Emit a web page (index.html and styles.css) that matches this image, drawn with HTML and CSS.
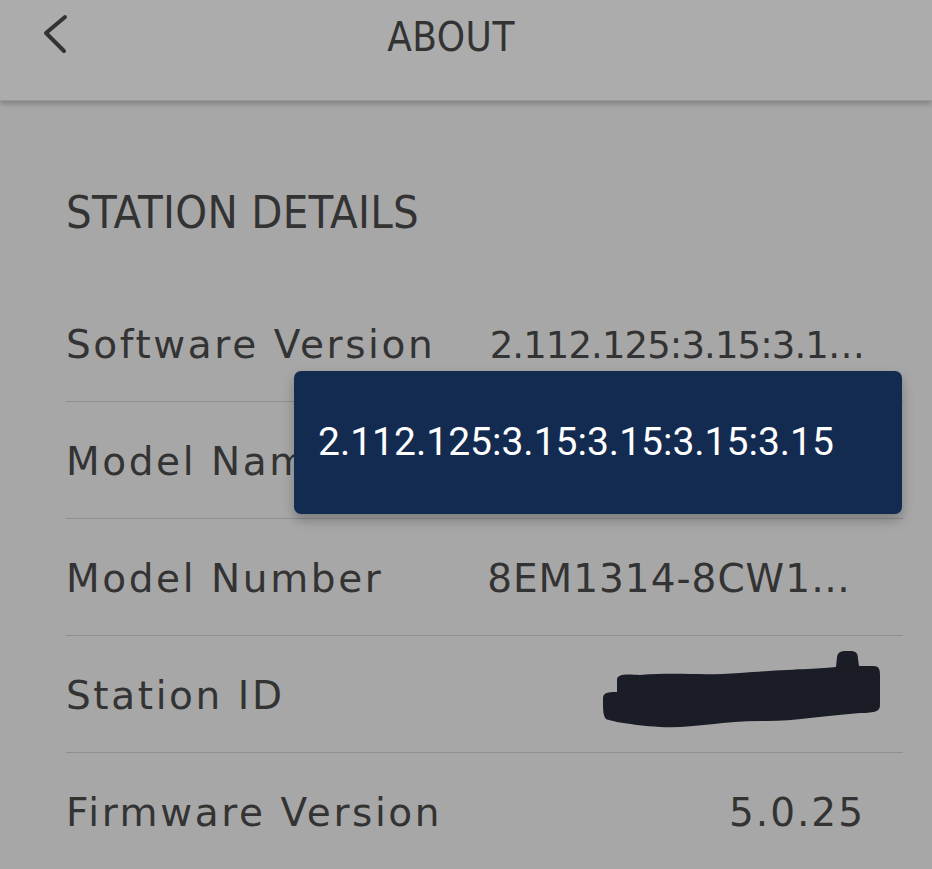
FILE: index.html
```html
<!DOCTYPE html>
<html lang="en">
<head>
<meta charset="utf-8">
<title>About</title>
<link rel="stylesheet" href="styles.css">
</head>
<body>
<div class="screen">
  <header class="topbar">
    <button class="back" aria-label="Back">
      <svg width="40" height="50" viewBox="0 0 40 50"><path d="M24 5 L5 21 L23 39" fill="none" stroke="#333" stroke-width="4" stroke-linecap="round" stroke-linejoin="round"/></svg>
    </button>
    <h1 class="title">ABOUT</h1>
  </header>
  <main class="content">
    <h2 class="section">STATION DETAILS</h2>
    <ul class="rows">
      <li class="row"><span class="label">Software Version</span><span class="value value-long">2.112.125:3.15:3.1…</span></li>
      <li class="row"><span class="label">Model Name</span><span class="value"></span></li>
      <li class="row"><span class="label">Model Number</span><span class="value value-trunc">8EM1314-8CW1…</span></li>
      <li class="row"><span class="label">Station ID</span><span class="value redact">
        <svg width="290" height="90" viewBox="595 645 290 90"><path d="M603,700 C603,694 606,693 617,693 L617,681 C617,675 625,675 640,676 C680,673 700,677 740,674 C790,670 820,670 836,668 L837,658 C838,652 842,652 850,652 C856,652 858,654 858,660 L859,667 L873,667 C879,667 880,670 880,676 L880,706 C880,712 876,714 860,714 C820,717 790,723 760,722 C720,722 690,730 660,728 C630,726 610,722 606,720 C603,716 603,712 603,700 Z" fill="#1b1d26"/></svg>
      </span></li>
      <li class="row"><span class="label">Firmware Version</span><span class="value">5.0.25</span></li>
    </ul>
    <div class="tooltip">2.112.125:3.15:3.15:3.15:3.15</div>
  </main>
</div>
</body>
</html>
```
FILE: styles.css
```css
* { box-sizing: border-box; }
html, body { margin: 0; padding: 0; }
body {
  width: 932px;
  height: 869px;
  overflow: hidden;
  background: #a7a7a7;
  font-family: "DejaVu Sans", sans-serif;
  color: #333;
}
.screen { position: relative; height: 869px; }
.topbar {
  position: relative;
  z-index: 1;
  height: 101px;
  background: #acacac;
  display: flex;
  align-items: flex-start;
  justify-content: center;
  padding-right: 30px;
  box-shadow: 0 3px 5px rgba(0,0,0,0.22);
  border-bottom: 1px solid #999;
}
.back {
  position: absolute;
  left: 41px;
  top: 12px;
  background: none;
  border: 0;
  padding: 0;
  margin: 0;
}
.title {
  margin: 0;
  padding-top: 15px;
  font-family: "DejaVu Sans Condensed", "DejaVu Sans", sans-serif;
  font-stretch: condensed;
  font-weight: normal;
  font-size: 40px;
  line-height: 44px;
  letter-spacing: 0.5px;
  color: #333;
}
.content {
  position: relative;
  padding: 0 29px 0 66px;
}
.section {
  margin: 0;
  padding-top: 87px;
  height: 184px;
  font-family: "DejaVu Sans Condensed", "DejaVu Sans", sans-serif;
  font-stretch: condensed;
  font-weight: normal;
  font-size: 45px;
  line-height: 50px;
  letter-spacing: 0.3px;
  color: #333;
}
.rows { list-style: none; margin: 0; padding: 0; }
.row {
  display: flex;
  align-items: baseline;
  justify-content: space-between;
  height: 117px;
  padding-top: 40px;
  border-bottom: 1px solid #8f8f8f;
}
.label {
  font-size: 39px;
  line-height: 40px;
  letter-spacing: 2.6px;
  white-space: nowrap;
}
.value {
  font-size: 39px;
  line-height: 40px;
  letter-spacing: 2px;
  white-space: nowrap;
  padding-right: 38px;
}
.value-long { font-size: 37px; letter-spacing: -0.9px; padding-right: 39px; }
.value-trunc { padding-right: 52px; letter-spacing: 1px; }
.redact { padding-right: 0; margin-right: 18px; align-self: flex-start; margin-top: -32px; }
.redact svg { display: block; }
.tooltip {
  position: absolute;
  left: 294px;
  top: 270px;
  width: 608px;
  height: 143px;
  background: #132b51;
  border-radius: 7px;
  box-shadow: 0 6px 12px rgba(0,0,0,0.25);
  color: #fff;
  font-family: Roboto, sans-serif;
  font-size: 39px;
  line-height: 143px;
  padding-left: 24px;
  white-space: nowrap;
}
```
